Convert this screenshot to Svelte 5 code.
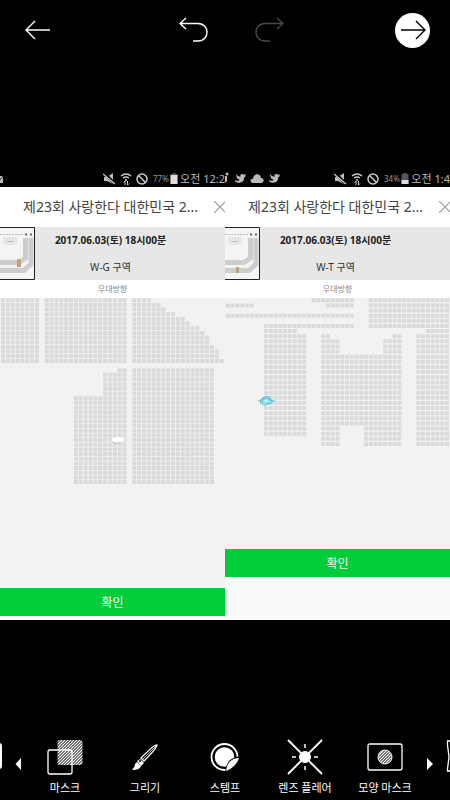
<script>
  // Seat runs: [firstRow, lastRow, firstColumn, lastColumn]
  const westG = [
    [0, 13, 0, 7], [0, 13, 9, 25],
    ...[4, 6, 7, 9, 11, 12, 14, 15, 16, 16, 17, 18, 18, 19].map((n, r) => [r, r, 27, 26 + n]),
    [15, 15, 24, 25], [16, 20, 21, 25], [21, 39, 15, 25], [15, 39, 27, 43]
  ];
  const westT = [
    [0, 0, 18, 26], [1, 1, 0, 5], [1, 1, 21, 26], [3, 3, 0, 26], [5, 5, 8, 26],
    [0, 5, 30, 46], [6, 6, 8, 14], [6, 6, 42, 46], [7, 26, 8, 16], [7, 7, 20, 21],
    [7, 7, 35, 36], [8, 10, 20, 23], [8, 10, 33, 36], [11, 24, 20, 36],
    [25, 28, 20, 23], [25, 28, 29, 36], [7, 28, 40, 46]
  ];
  const shots = [
    { zone: 'W-G 구역', battery: '77%', charge: 9, time: '오전 12:2', runs: westG, dx: 4.86, dy: 4.66, mark: 'white', gx: 17, gy: 36 },
    { zone: 'W-T 구역', battery: '34%', charge: 4, time: '오전 1:4', runs: westT, dx: 4.76, dy: 5.13, mark: 'blue', gx: 11, gy: 40 }
  ];
  function seats({ runs, dx, dy }) {
    let d = '';
    for (const [r0, r1, c0, c1] of runs)
      for (let r = r0; r <= r1; r++)
        for (let c = c0; c <= c1; c++)
          d += `M${(1 + c * dx).toFixed(2)} ${(0.3 + r * dy).toFixed(2)}h4v4h-4z`;
    return d;
  }
  const bird = 'M0 8C3 9 5 8 5 7C3 7 2 6 2 5L1 1C3 3 4 4 6 4C5 1 8 0 10 2L12 1L11 3L12 3L10 5C10 11 4 12 0 9Z';
</script>

<div class="editor">
  <header>
    <button class="back" aria-label="뒤로"><svg width="26" height="20" viewBox="0 0 26 20"><path d="M25 10H1M10 1L1 10L10 19" /></svg></button>
    <div class="history">
      <button aria-label="실행 취소"><svg width="30" height="26" viewBox="0 0 30 26"><path d="M7 1L1 6.500L7 12M1 6.500H19C31 6.500 31 24 19 24H14" /></svg></button>
      <button aria-label="다시 실행" disabled><svg width="30" height="26" viewBox="0 0 30 26"><path d="M23 1L29 6.500L23 12M29 6.500H11C-1 6.500 -1 24 11 24H16" /></svg></button>
    </div>
    <button class="next" aria-label="다음"><svg width="26" height="20" viewBox="0 0 26 20"><path d="M1 10H25M16 1L25 10L16 19" /></svg></button>
  </header>

  <main>
    {#each shots as shot, i}
      <section class="shot">
        <div class="status">
          {#if i === 0}
            <svg class="lead" width="4" height="14" viewBox="0 0 4 14"><path d="M0 4H3V11H0Z" fill="#bbb" /><path d="M0 8L3 4" stroke="#333" /></svg>
          {:else}
            <svg class="lead" width="56" height="14" viewBox="0 0 56 14" fill="#bbb">
              <circle cx="2" cy="2" r="1.500" /><path d="M0 4H2V9L0 11Z" />
              <path d={bird} transform="translate(10 1) scale(.92)" />
              <path d="M29 11C24 11 25 6 28 7C28 2 35 0 36 6C40 6 39 11 36 11Z" />
              <path d={bird} transform="translate(44 1) scale(.92)" />
            </svg>
          {/if}
          <svg width="48" height="14" viewBox="0 0 48 14" fill="none" stroke="#ccc">
            <path d="M1 5H4L10 1V12L4 9H1Z" fill="#bbb" stroke="none" /><path d="M1 1L12 12" stroke="#000" stroke-width="3" /><path d="M0 2L12 12" stroke-width="1.300" />
            <path d="M18 4Q23 0 28 4M20 6Q23 4 26 6M22 8H24" stroke-width="1.400" /><path d="M22 13V9L20.500 10.500M24.500 9V13L26 11.500" />
            <circle cx="39" cy="7" r="5" stroke-width="1.500" /><path d="M35.500 3.500L42.500 10.500" stroke-width="1.500" />
          </svg>
          <span class="pct">{shot.battery}</span>
          <svg width="8" height="12" viewBox="0 0 8 12"><path d="M2.500 0H5.500V1H7.500V11H.5V1H2.500Z" fill="#555" /><rect x=".5" y={11 - shot.charge} width="7" height={shot.charge} fill="#ddd" /></svg>
          <span class="time">{shot.time}</span>
        </div>
        <div class="title">
          <h2>제23회 사랑한다 대한민국 2...</h2>
          <button aria-label="닫기"><svg width="12" height="12" viewBox="0 0 12 12"><path d="M0 0L12 12M12 0L0 12" /></svg></button>
        </div>
        <div class="info">
          <svg class="mini" width="35" height="53" viewBox="0 0 35 53">
            <path d="M-1 .5H34.500V52.500H-1" fill="#f4f4f4" stroke="#222" />
            <path d="M0 7.500H24" stroke="#bbb" stroke-dasharray="2 1" /><path d="M25 7.500H33" stroke="#666" stroke-width="2" stroke-dasharray="2 3" />
            <path d="M3 10H17V16L14 18H6L3 16Z" fill="#e6e6e6" /><path d="M7 14.500H13" stroke="#bbb" />
            <path d="M25.500 11V31L19 35.500H0" fill="none" stroke="#cdcdcd" stroke-width="5" />
            <path d="M31 11V37L24 43.500H0" fill="none" stroke="#cdcdcd" stroke-width="5" />
            <rect x={shot.gx} y={shot.gy - (i ? 0 : 4)} width={i ? 3 : 4} height={i ? 6 : 8} fill="#bba574" />
          </svg>
          <div class="details"><strong>2017.06.03(토) 18시00분</strong><span>{shot.zone}</span></div>
        </div>
        <div class="stage">무대방향</div>
        <div class="map">
          <svg viewBox="0 0 225 190" width="100%">
            <path d={seats(shot)} fill="#dadada" />
            {#if shot.mark === 'white'}
              <path d="M111 142Q113 139 118 139Q123 139 125 142Q121 145 117 144Q112 144 111 142Z" fill="#fff" /><path d="M112 144Q117 147 121 144" fill="none" stroke="#bbb" stroke-width=".8" />
            {:else}
              <path d="M34 103Q37 98 42 98Q46 99 49 103Q46 106 41 107Q36 106 34 103Z" fill="#83d9ef" />
              <path d="M33 102L36 104L38 100L40 101L42 97M35 105L40 108L43 105L45 106L50 102M44 98V101L47 103" fill="none" stroke="#438ca5" stroke-width=".8" stroke-dasharray="1.500 1" />
              <path d="M38 103L41 101L44 103L41 105Z" fill="#b9f2ff" />
            {/if}
          </svg>
        </div>
        <button class="confirm">확인</button>
        <div class={i ? 'rest tall' : 'rest'}></div>
      </section>
    {/each}
  </main>

  <nav>
    <svg class="edge" width="25" height="40" viewBox="0 0 25 40"><rect x="-20" y="4" width="22" height="26" rx="3" fill="#fff" /><path d="M21 19V31L15.500 25Z" fill="#fff" /></svg>
    <button><svg width="40" height="40" viewBox="0 0 40 40">
      <defs><pattern id="hatch" width="3" height="3" patternUnits="userSpaceOnUse"><path d="M-1 1L1 -1M0 3L3 0M2 4L4 2" stroke="#fff" stroke-width="1.300" /></pattern></defs>
      <rect x="12.500" y="1" width="25" height="25" rx="2" fill="url(#hatch)" /><rect x="3" y="11" width="24" height="24" rx="2" fill="none" stroke="#fff" stroke-width="1.300" />
    </svg><span>마스크</span></button>
    <button><svg width="40" height="40" viewBox="0 0 40 40">
      <path d="M32 6Q32 9 19 22L16 19Q30 5 32 6Z" fill="none" stroke="#fff" stroke-width="1.300" /><path d="M31 7L18 20" stroke="#fff" stroke-width=".8" />
      <path d="M15 20L19 24L16 27L12 22Z" fill="#fff" /><circle cx="15" cy="22" r="1" fill="#000" /><path d="M12 23L16 27Q15 31 7 31Q10 28 10 25Z" fill="#fff" />
    </svg><span>그리기</span></button>
    <button><svg width="40" height="40" viewBox="0 0 40 40">
      <circle cx="19.500" cy="18" r="13" fill="none" stroke="#fff" stroke-width="1.800" /><circle cx="19.500" cy="18" r="9.800" fill="#fff" />
      <path d="M36 17Q29 18 25 21Q21 25 20 34H38Z" fill="#000" /><path d="M34 19Q29 19 25.500 22Q22 25 21 32Q25 31 29 27Q33 23 34 19Z" fill="#fff" />
    </svg><span>스템프</span></button>
    <button><svg width="40" height="40" viewBox="0 0 40 40" stroke="#fff">
      <circle cx="20" cy="18" r="5.500" fill="#fff" /><path d="M3 1L37 35M37 1L3 35" stroke-width="1.900" /><path d="M20 5V9M20 27V31M7 18H11M29 18H33" stroke-width="1.500" />
    </svg><span>렌즈 플레어</span></button>
    <button><svg width="40" height="40" viewBox="0 0 40 40" stroke="#fff">
      <rect x="3" y="5" width="34" height="26" rx="2" fill="none" stroke-width="1.300" /><circle cx="20" cy="18" r="7" fill="url(#hatch)" />
    </svg><span>모양 마스크</span></button>
    <svg class="edge" width="25" height="40" viewBox="0 0 25 40"><path d="M2 19V31L8 25Z" fill="#fff" /><path d="M25 2H22.500V6L24 18L22.500 30V32H25" fill="none" stroke="#fff" stroke-width="1.300" /></svg>
  </nav>
</div>

<style>
  :global(body) { background: #000; }
  .editor { min-height: 100vh; display: flex; flex-direction: column; justify-content: space-between; overflow: hidden; color: #fff; font-family: "Noto Sans", "Noto Sans CJK KR", sans-serif; }
  button { border: 0; padding: 0; margin: 0; background: none; color: inherit; font: inherit; display: flex; align-items: center; justify-content: center; }
  svg { display: block; flex: none; }
  header { height: 60px; padding: 0 20px 0 25px; display: flex; align-items: center; justify-content: space-between; box-sizing: border-box; }
  header path { fill: none; stroke: #fff; stroke-width: 1.4; }
  .history { display: flex; gap: 45px; padding-left: 16px; }
  .history button:disabled path { stroke: #484848; }
  .next { width: 35px; height: 35px; border-radius: 50%; background: #fff; }
  .next path { stroke: #000; }
  main { display: flex; align-items: stretch; margin-bottom: 9px; }
  .shot { flex: 1 1 0; min-width: 0; overflow: hidden; display: flex; flex-direction: column; background: #fff; color: #333; }
  .status { height: 17px; background: #000; color: #bbb; display: flex; align-items: center; white-space: nowrap; }
  .lead { margin-right: 99px; }
  .shot + .shot .lead { margin-right: 53px; }
  .pct { font-size: 8px; line-height: 17px; color: #999; width: 19px; margin-left: 2px; }
  .time { font-size: 11px; line-height: 17px; margin-left: 2px; }
  .title { height: 40px; display: flex; align-items: center; justify-content: flex-end; gap: 16px; }
  h2 { margin: 0; font-size: 14px; line-height: 20px; font-weight: 400; white-space: nowrap; color: #444; }
  .title button { width: 11px; overflow: hidden; justify-content: flex-start; }
  .title path { stroke: #999; stroke-width: 1.2; }
  .info { height: 53px; background: #e7e7e7; display: flex; }
  .details { flex: 1; display: flex; flex-direction: column; align-items: center; gap: 11px; padding: 5px 4px 0 0; margin-left: -35px; font-size: 10px; line-height: 16px; white-space: nowrap; }
  .details strong { color: #222; }
  .stage { height: 18px; line-height: 18px; text-align: center; font-size: 8px; color: #888; }
  .map { flex: 1; background: #f2f2f2; min-height: 251px; }
  .confirm { height: 28px; width: 100%; background: #00cd38; color: #fff; font-size: 12px; }
  .rest { height: 4px; background: #fafafa; }
  .rest.tall { height: 43px; }
  nav { height: 61px; display: flex; align-items: flex-start; }
  nav button { flex: 1 1 0; min-width: 0; flex-direction: column; font-size: 11px; line-height: 18px; white-space: nowrap; }
</style>
